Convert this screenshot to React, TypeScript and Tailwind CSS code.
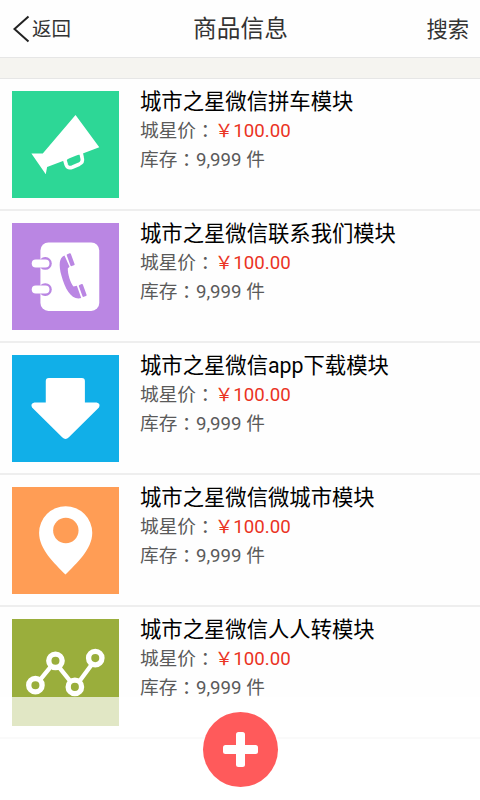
import type { ReactNode } from "react";

type Product = {
  name: string;
  price: string;
  stock: string;
  color: string;
  icon: ReactNode;
};

const products: Product[] = [
  {
    name: "城市之星微信拼车模块",
    price: "100.00",
    stock: "9,999",
    color: "bg-[#2dd796]",
    icon: (
      <>
        <path
          d="M190 72 L261 168 L105 227 L101 249 L58 187 L92 187 Z"
          fill="white"
        />
        <path
          d="M158 206 L162 220 Q167 233 180 228 L201 219 Q213 213 210 201 L207 187 Q200 183 190 188 L170 196 Q160 200 158 206 Z"
          fill="#2dd796"
          stroke="white"
          strokeWidth="11"
        />
      </>
    ),
  },
  {
    name: "城市之星微信联系我们模块",
    price: "100.00",
    stock: "9,999",
    color: "bg-[#ba86e3]",
    icon: (
      <>
        <rect x="85" y="58" width="176" height="205" rx="24" fill="white" />
        <g fill="#ba86e3">
          <rect x="80" y="102" width="39" height="38" rx="19" />
          <rect x="80" y="180" width="39" height="38" rx="19" />
        </g>
        <rect x="59" y="109" width="53" height="24" rx="12" fill="white" />
        <rect x="59" y="187" width="53" height="24" rx="12" fill="white" />
        <g fill="#ba86e3">
          <path d="M157 97 C141 103 139 125 148 158 C158 195 175 226 199 226 L207 224 L194 188 L184 190 C175 180 166 151 167 135 L172 131 Z" />
          <rect x="169" y="91" width="13" height="38" rx="3" transform="rotate(-20 175 110)" />
          <rect x="205" y="183" width="13" height="38" rx="3" transform="rotate(-20 211 202)" />
        </g>
      </>
    ),
  },
  {
    name: "城市之星微信app下载模块",
    price: "100.00",
    stock: "9,999",
    color: "bg-[#11afe8]",
    icon: (
      <path
        d="M110 69 H209 Q218 69 218 78 V142 H253 Q266 145 260 157 L170 246 Q160 256 150 246 L60 157 Q54 145 67 142 H101 V78 Q101 69 110 69 Z"
        fill="white"
      />
    ),
  },
  {
    name: "城市之星微信微城市模块",
    price: "100.00",
    stock: "9,999",
    color: "bg-[#ff9d55]",
    icon: (
      <>
        <path
          d="M160 262 C127 228 81 187 81 137 A79.500 79.500 0 0 1 240 137 C240 187 193 228 160 262 Z"
          fill="white"
        />
        <circle cx="161" cy="130" r="38" fill="#ff9d55" />
      </>
    ),
  },
  {
    name: "城市之星微信人人转模块",
    price: "100.00",
    stock: "9,999",
    color: "bg-[#9aae3c]",
    icon: (
      <g stroke="white" fill="none">
        <path d="M82 184 L118 140 M141 145 L176 188 M201 187 L238 137" strokeWidth="13" />
        <g strokeWidth="16">
          <circle cx="70" cy="198" r="20" />
          <circle cx="130" cy="125" r="20" />
          <circle cx="188" cy="203" r="20" />
          <circle cx="249" cy="117" r="20" />
        </g>
      </g>
    ),
  },
];

function Colon() {
  return (
    <span className="relative top-px font-['Noto_Sans_CJK_TC',sans-serif] leading-none">：</span>
  );
}

function Header() {
  return (
    <header className="flex h-[57px] items-center justify-between pt-0.5 pr-[11px] pl-3 text-[#333]">
      <button className="flex w-[100px] items-center">
        <svg className="-mt-0.5 h-7 w-5" viewBox="0 0 20 28" fill="none" stroke="#222" strokeWidth="2">
          <path d="M16.500 1.500 L2.500 14 L16.500 26.500" />
        </svg>
        <span className="text-[19.500px]">返回</span>
      </button>
      <h1 className="text-[23.700px]">商品信息</h1>
      <button className="w-[100px] text-right text-[21.300px]">搜索</button>
    </header>
  );
}

function ProductRow({ product }: { product: Product }) {
  return (
    <li className="flex h-[132px] border-b-2 border-[#eee] pt-3 pl-3">
      <div className={`size-[107px] shrink-0 ${product.color}`}>
        <svg className="size-full" viewBox="0 0 320 320">
          {product.icon}
        </svg>
      </div>
      <div className="-mt-[3px] ml-[21px] whitespace-nowrap text-[18.670px] leading-[29px] text-[#5a5a5a]">
        <h2 className="h-[29px] text-[21.330px] leading-7 text-black">{product.name}</h2>
        <p className="h-[29px]">
          城星价
          <Colon />
          <span className="text-[#ea3323]">￥{product.price}</span>
        </p>
        <p className="h-[29px]">
          库存
          <Colon />
          {product.stock} 件
        </p>
      </div>
    </li>
  );
}

export default function App() {
  return (
    <div className="relative h-[800px] w-[480px] overflow-hidden bg-[#fefefe] font-[Roboto,'Noto_Sans_CJK_SC',sans-serif]">
      <Header />
      <div className="h-[22px] border-y border-[#e6e6e6] bg-[#f5f4f0]" />
      <ul>
        {products.map((product) => (
          <ProductRow key={product.name} product={product} />
        ))}
      </ul>

      {/* floating add bar */}
      <div className="absolute inset-x-0 bottom-0 flex h-[103px] justify-center bg-white/70 pt-[15px]">
        <button className="flex size-[75px] items-center justify-center rounded-full bg-[#ff5a5b]">
          <svg className="size-[35px]" viewBox="0 0 35 35" fill="white">
            <rect x="13" width="9" height="35" rx="2.500" />
            <rect y="13" width="35" height="9" rx="2.500" />
          </svg>
        </button>
      </div>
    </div>
  );
}
